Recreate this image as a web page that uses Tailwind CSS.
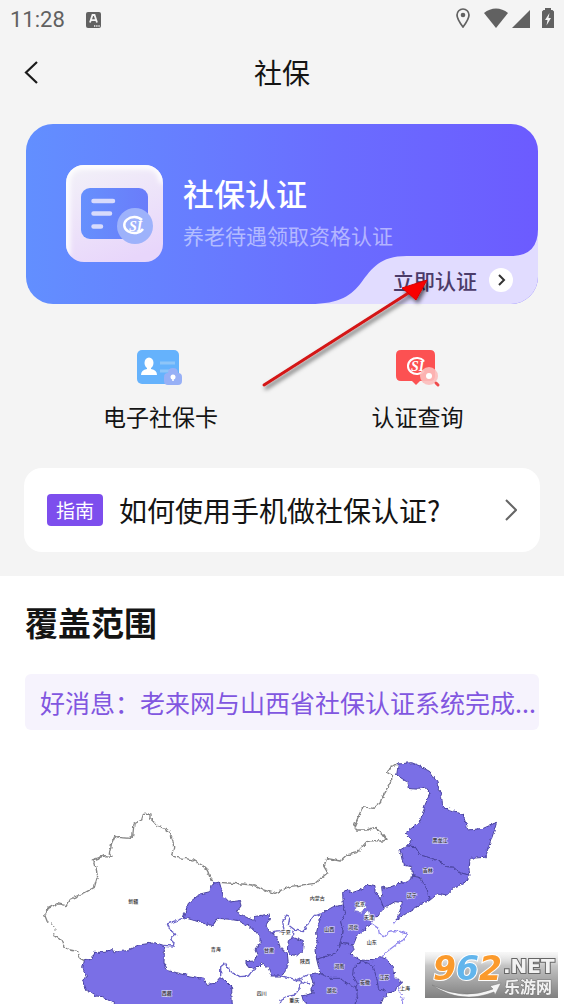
<!DOCTYPE html>
<html lang="zh-CN">

<head>
    <meta charset="UTF-8">
    <meta name="viewport" content="width=device-width, initial-scale=1.0">
    <title>社保</title>

    <!-- Tailwind CSS CDN -->
    <script src="https://cdn.jsdelivr.net/npm/@tailwindcss/browser@4"></script>
</head>

<body class="bg-white font-['Noto_Sans_CJK_SC','Noto_Sans',sans-serif] text-[#141414] overflow-x-hidden">

    <div class="bg-[#f4f4f4] pb-6">

        <!-- Status bar -->
        <div class="flex items-center justify-between h-10 pl-2.5 pr-2.5 text-[#616161]">
            <div class="flex items-center gap-5">
                <span class="font-[Roboto,sans-serif] text-[22px] leading-10">11:28</span>
                <svg class="w-4 h-4" viewBox="0 0 16 16">
                    <rect x="1" width="15" height="16" rx="2" fill="currentColor" />
                    <path d="M5 10.500 7.500 3h2l2.500 7.500M6 8.200h5" fill="none" stroke="#f4f4f4" stroke-width="1.800" />
                    <path d="M9 14h1.300M11.200 14h1.300M13.400 14h1.300" stroke="#f4f4f4" stroke-width="1.300" />
                </svg>
            </div>
            <div class="flex items-center h-10 pb-1">
                <svg class="w-3.5 h-5 mr-3.5" viewBox="0 0 14 20">
                    <path d="M7 1a6 6 0 0 0-6 6c0 4 6 12 6 12s6-8 6-12a6 6 0 0 0-6-6z" fill="none" stroke="currentColor" stroke-width="1.700" />
                    <circle cx="7" cy="7" r="2.300" fill="currentColor" />
                </svg>
                <svg class="w-6 h-5 mr-1" viewBox="0 0 24 20">
                    <path d="M12 20 0 5C7-1 17-1 24 5z" fill="currentColor" />
                </svg>
                <svg class="w-[18px] h-5 mr-3" viewBox="0 0 18 20">
                    <path d="M18 2v18H0z" fill="currentColor" />
                </svg>
                <svg class="w-3 h-5" viewBox="0 0 12 20">
                    <path d="M3 0h6v2h1.500L12 3.500V20H0V3.500L1.500 2H3z" fill="currentColor" />
                    <path d="M7.500 5 3 12h2.500L4.500 17.500 9 10H6.500z" fill="#f4f4f4" />
                </svg>
            </div>
        </div>

        <!-- Title bar -->
        <header class="relative flex items-center justify-center h-16">
            <button aria-label="返回" class="absolute left-4 top-3 p-2">
                <svg class="w-4 h-6" viewBox="0 0 16 24" fill="none" stroke="#1a1a1a" stroke-width="2.200">
                    <path d="M13 2 2 12.500 13 23" />
                </svg>
            </button>
            <h1 class="text-[28px] leading-10">社保</h1>
        </header>

        <!-- Certification card -->
        <section class="relative mx-[26px] mt-5">
            <div class="rounded-[27px] overflow-hidden">
                <div class="relative flex gap-5 h-[180px] pl-10 pt-[41px] bg-linear-to-r from-[#628fff] via-[#6a6dff] via-60% to-[#6c5bff]">
                    <svg class="w-[97px] h-[97px] shrink-0" viewBox="0 0 97 97">
                        <defs>
                            <linearGradient id="tile" x1="0.200" y1="0" x2="0.600" y2="1">
                                <stop offset="0" stop-color="#f2f0f8" />
                                <stop offset="1" stop-color="#e8d6fb" />
                            </linearGradient>
                            <linearGradient id="panel">
                                <stop offset="0" stop-color="#6690fd" />
                                <stop offset="1" stop-color="#6a7cfa" />
                            </linearGradient>
                            <filter id="soft">
                                <feGaussianBlur stdDeviation="2.500" />
                            </filter>
                            <clipPath id="tile-clip">
                                <rect width="97" height="97" rx="18" />
                            </clipPath>
                        </defs>
                        <g clip-path="url(#tile-clip)">
                            <rect width="97" height="97" fill="url(#tile)" />
                            <path d="M1 90V18Q1 1 18 1h62q16 0 16 17" fill="none" stroke="#fff" stroke-width="6" filter="url(#soft)" />
                        </g>
                        <rect x="15" y="23" width="67" height="51" rx="9" fill="url(#panel)" />
                        <path d="M27.500 36h19.500M27.500 48.500h16.500M27.500 61.500h7.500" stroke="#d8dbfc" stroke-width="4.500" stroke-linecap="round" />
                        <circle cx="69" cy="61" r="18" fill="#9db2fb" />
                        <path d="M76 55a10 8 0 1 0 1 9" fill="none" stroke="#fff" stroke-width="2.500" />
                        <text x="63" y="66" font-family="Liberation Serif" font-size="14" font-weight="700" font-style="italic" fill="#fff">SI</text>
                    </svg>
                    <div>
                        <h2 class="mt-1.5 text-[31px] leading-[44px] font-medium text-white">社保认证</h2>
                        <p class="text-[21px] leading-10 text-white/50">养老待遇领取资格认证</p>
                    </div>
                    <svg class="absolute right-0 bottom-0 w-[228px] h-[75px]" viewBox="90 341 684 225">
                        <path d="M90 566C180 566 215 540 245 500S300 422 380 422H700Q774 418 774 341V566z" fill="#e1dcff" />
                    </svg>
                    <button class="absolute right-[25px] bottom-2 flex items-center gap-3 text-[21px] leading-8 font-medium text-[#4b3b69]">
                        立即认证
                        <svg class="w-6 h-6" viewBox="0 0 24 24">
                            <circle cx="12" cy="12" r="12" fill="#fff" />
                            <path d="m10 7 5 5-5 5" fill="none" stroke="#333" stroke-width="2" />
                        </svg>
                    </button>
                </div>
            </div>

            <!-- Pointer arrow over the card -->
            <svg class="absolute left-[232px] top-[152px] w-[180px] h-[120px] pointer-events-none" viewBox="0 0 180 120">
                <defs>
                    <filter id="arrow-shadow">
                        <feDropShadow dx="2" dy="3" stdDeviation="2" flood-color="#000" flood-opacity="0.600" />
                    </filter>
                </defs>
                <g filter="url(#arrow-shadow)">
                    <path d="M6 109 152 16" stroke="#d41414" stroke-width="3" stroke-linecap="round" />
                    <path d="M169 4 144 12 150 17 158 24z" fill="#f80000" stroke="#d80000" />
                </g>
            </svg>
        </section>

        <!-- Shortcuts -->
        <nav class="grid grid-cols-2 pl-8 pr-[18px] pt-10">
            <a href="#" class="flex flex-col items-center gap-2">
                <svg class="w-[50px] h-12" viewBox="0 0 50 48">
                    <rect x="1" y="6" width="42" height="34" rx="5" fill="#65b2fc" />
                    <path d="M24 19h15M24 27h10" stroke="#8ec5f8" stroke-width="3" />
                    <ellipse cx="13" cy="19" rx="4.500" ry="5.500" fill="#fff" />
                    <path d="M11 22h4v3q6 1 6 6H5q0-5 6-6z" fill="#fff" />
                    <path d="M32 29q0-5 5-5t5 5q4 0 4 4v4q0 4-4 4H32q-4 0-4-4v-4q0-4 4-4z" fill="#97b0f6" />
                    <circle cx="37" cy="33" r="2.500" fill="#fff" />
                    <path d="M37 33v4" stroke="#fff" stroke-width="1.500" />
                </svg>
                <span class="text-[23px] leading-8">电子社保卡</span>
            </a>
            <a href="#" class="flex flex-col items-center gap-2">
                <svg class="w-[50px] h-12" viewBox="0 0 50 48">
                    <path d="M10 6h27q5 0 5 5v21q0 5-5 5H27l-4 4-4-4H8q-5 0-5-5V11q0-5 5-5z" fill="#fc5152" />
                    <path d="M31 17a9 8 0 1 0 0 10" fill="none" stroke="#fff" stroke-width="2" />
                    <text x="18" y="27" font-family="Liberation Serif" font-size="14" font-weight="700" font-style="italic" fill="#fff">SI</text>
                    <circle cx="36" cy="32" r="9" fill="#fcbcbb" fill-opacity="0.900" />
                    <circle cx="36" cy="32" r="3" fill="#fff" />
                    <path d="m43 39 2 2" stroke="#ef4a4c" stroke-width="3" stroke-linecap="round" />
                </svg>
                <span class="text-[23px] leading-8">认证查询</span>
            </a>
        </nav>

        <!-- Guide -->
        <a href="#" class="flex items-center h-[84px] mx-6 mt-9 px-[23px] bg-white rounded-[18px]">
            <span class="w-14 h-8 rounded bg-[#7d4eed] text-center text-[19px] leading-8 text-white">指南</span>
            <span class="ml-4 text-[28px] leading-10">如何使用手机做社保认证?</span>
            <svg class="ml-auto w-3 h-[22px]" viewBox="0 0 12 22" fill="none" stroke="#666" stroke-width="2">
                <path d="m1 1 10 10L1 21" />
            </svg>
        </a>
    </div>

    <!-- Coverage -->
    <main>
        <h2 class="mx-[25px] pt-[22px] text-[33px] leading-12 font-bold">覆盖范围</h2>
        <p class="mx-[25px] mt-7 h-14 px-[15px] rounded-md bg-[#f6f3fd] text-[25px] leading-14 text-[#8156e0] whitespace-nowrap">好消息：老来网与山西省社保认证系统完成...</p>

        <svg class="block mx-[30px] mt-5 w-[calc(100%-60px)] overflow-hidden" viewBox="0 0 1512 762" role="img" aria-label="覆盖范围地图">
            <defs>
                <filter id="rough" x="0" y="0" width="1" height="1" color-interpolation-filters="sRGB">
                    <feTurbulence type="fractalNoise" baseFrequency="0.080" numOctaves="2" seed="4" />
                    <feDisplacementMap in="SourceGraphic" scale="12" xChannelSelector="R" yChannelSelector="G" />
                </filter>
            </defs>
            <g filter="url(#rough)" stroke-linejoin="round">
                <rect width="1512" height="762" fill="#fff" />

                <!-- National border -->
                <g fill="none" stroke="#858585" stroke-width="4">
                    <path d="M548 393 540 383 535 368 527 352 515 345 490 330 465 326 440 322 425 317 431 290 428 270 415 242 405 235 385 230 372 217 360 205 360 192 340 193 335 210 312 222 308 258 300 265 265 262 255 257 245 280 238 310 243 319 225 317 187 330 195 340 203 378 193 412 165 428 118 448 108 467 82 461 55 475 44 495 52 515" />
                    <path d="M52 515 68 520 75 540 70 556" stroke-dasharray="4 8" />
                    <path d="M70 556 98 573 102 590 120 600 143 604 150 625 163 632" />
                    <path d="M568 397 635 402 670 405 695 418 735 430 780 410 855 400 893 368 882 350 890 325 930 333 950 315 980 308 995 292 1010 275 1030 272 1060 273 1068 268 1060 255 1035 232 1010 240 980 240 972 230 998 170 1030 175 1050 160 1055 145 1085 95 1085 75 1072 68 1080 50 1105 42" />
                </g>

                <!-- Covered provinces -->
                <g fill="#7a6fe6" stroke="#4a449f" stroke-width="3">
                    <path d="M163 632 185 628 195 607 225 607 245 599 258 606 290 602 325 585 375 578 400 586 403 600 402 640 415 662 440 668 480 678 520 685 532 703 555 700 570 682 585 690 605 710 607 780H258V762L215 740 200 738 165 718 158 690 172 680 158 655z" />
                    <g transform="translate(450 0)">
                        <path d="M10 502 25 460 60 432 90 425 93 402 118 396 130 438 148 456 180 452 183 468 170 485 195 500 222 512 222 500 268 492 268 508 258 525 270 545 290 560 300 590 322 612 325 640 318 660 305 678 275 678 265 655 245 640 230 655 205 652 197 635 222 633 232 615 225 600 240 580 240 560 225 543 200 525 175 512 150 508 115 505 100 527 70 520 45 512z" />
                        <path d="M325 572 340 562 370 575 368 600 350 618 330 612 322 600z" />
                        <path d="M425 490 460 470 490 465 497 490 482 515 490 540 480 580 470 608 410 628 405 600 412 570 410 545z" />
                    </g>
                    <g transform="translate(930 0)">
                        <path d="M175 42 215 38 240 48 270 65 290 95 305 140 308 172 340 182 370 195 385 240 430 235 470 217 460 250 435 322 390 325 387 360 390 376 360 368 340 352 320 350 300 335 275 325 240 315 225 290 200 288 215 268 195 250 240 215 255 165 270 130 255 112 235 118 205 115 200 95 170 75z" />
                        <path d="M200 288 180 300 190 345 215 350 217 375 245 385 262 440 268 452 295 430 320 435 345 410 375 400 390 376 360 368 340 352 320 350 300 335 275 325 240 315 225 290z" />
                        <path d="M217 378 215 388 180 400 140 415 125 410 128 440 118 450 130 475 165 455 187 458 180 485 168 510 200 490 240 465 268 452 262 420 240 384z" />
                        <path d="M8 430 15 418 30 418 30 430 60 420 85 405 105 410 105 425 120 445 132 475 118 490 105 505 93 512 90 525 65 545 50 560 40 585 0 580 10 545 2 515 17 490 10 465z" />
                        <path d="M-70 628-10 608 0 580 35 585 45 595 30 612 60 630 100 632 115 618 140 628 160 650 165 680 185 700 170 712 165 725 145 728 130 745 115 780H-95V762L-110 755-115 738-80 730-85 715-80 700-90 672-60 668z" />
                        <path d="M-65 668-30 685 0 685 20 700 47 710 52 735 45 762M60 630 85 640 100 650 110 685 115 715 140 725M65 632 40 655 38 675 52 700 47 715" fill="none" />
                    </g>
                </g>

                <!-- Inner province lines -->
                <g fill="none" stroke="#6962c8" stroke-width="4">
                    <path d="M400 586 430 588 432 578 424 565 437 553 420 540 412 522 440 512 463 503" />
                    <g transform="translate(450 0)">
                        <path d="M122 685 122 650 135 640 150 665 180 680 205 678 215 665 230 655M305 678 335 685 365 695 355 720 345 735 320 740 300 750 298 762M365 695 390 702M355 690 385 672M325 640 318 660M275 548 300 545 312 540 308 515 320 495 330 500 325 525 345 540 370 545 385 520 400 500 425 490M345 540 335 565" />
                    </g>
                    <g transform="translate(930 0)">
                        <path d="M93 520 115 535 118 552 130 560 150 543 170 542 200 552 195 568 180 575 160 590 140 605 125 622M172 705 180 712 175 725 188 735M180 740 190 745 187 762M168 510 160 522" stroke="#9188ed" />
                        <path d="M42 485 55 460 60 452 75 455 80 475 65 488zM72 490 85 480 88 495 105 505 100 516 82 510z" fill="#fff" stroke-width="2" />
                    </g>
                </g>
            </g>

            <!-- Province names -->
            <g font-size="15" font-weight="500" text-anchor="middle" fill="#333" stroke="#fff" stroke-opacity="0.600" stroke-width="4" paint-order="stroke">
                <text x="310" y="458">新疆</text>
                <text x="410" y="736">西藏</text>
                <text x="557" y="604">青海</text>
                <text x="717" y="606">甘肃</text>
                <text x="695" y="734">四川</text>
                <text x="767" y="553">宁夏</text>
                <text x="825" y="639">陕西</text>
                <text x="862" y="451">内蒙古</text>
                <text x="898" y="543">山西</text>
                <text x="928" y="654">河南</text>
                <text x="905" y="726">湖北</text>
                <text x="793" y="756">重庆</text>
                <text x="1230" y="276">黑龙江</text>
                <text x="1193" y="366">吉林</text>
                <text x="1145" y="441">辽宁</text>
                <text x="990" y="469">北京</text>
                <text x="1017" y="506">天津</text>
                <text x="970" y="538">河北</text>
                <text x="1025" y="583">山东</text>
                <text x="1005" y="703">安徽</text>
                <text x="1063" y="686">江苏</text>
                <text x="1125" y="720">上海</text>
            </g>
        </svg>
    </main>

    <!-- Site mark -->
    <svg class="fixed right-1.5 bottom-1 w-[133px] h-[60px]" viewBox="0 -12 133 60">
        <defs>
            <linearGradient id="mark" x2="0" y2="1">
                <stop offset="0" stop-color="#eee" stop-opacity="0.400" />
                <stop offset="0.300" stop-color="#c4c4c4" />
                <stop offset="1" stop-color="#808080" />
            </linearGradient>
        </defs>
        <rect width="133" height="46" fill="url(#mark)" />
        <path d="M7 33Q38 49 68 37l-3-3 11-3-6 12-1-3Q36 53 7 33z" fill="#f4f4f4" stroke="#777" stroke-width="0.500" />
        <g font-family="DejaVu Sans" font-weight="700" paint-order="stroke">
            <text x="8" y="28" font-size="33" font-style="italic" fill="#fb9a2c" stroke="#fff" stroke-width="2">9<tspan fill="#62b5ec">6</tspan>2</text>
            <text x="78" y="21" font-size="20" fill="#f2f2f2" stroke="#666" stroke-width="2">.NET</text>
        </g>
        <text x="79" y="41" font-size="16" font-weight="700" fill="#f2f2f2" stroke="#777" stroke-width="1" paint-order="stroke">乐游网</text>
    </svg>

</body>

</html>
